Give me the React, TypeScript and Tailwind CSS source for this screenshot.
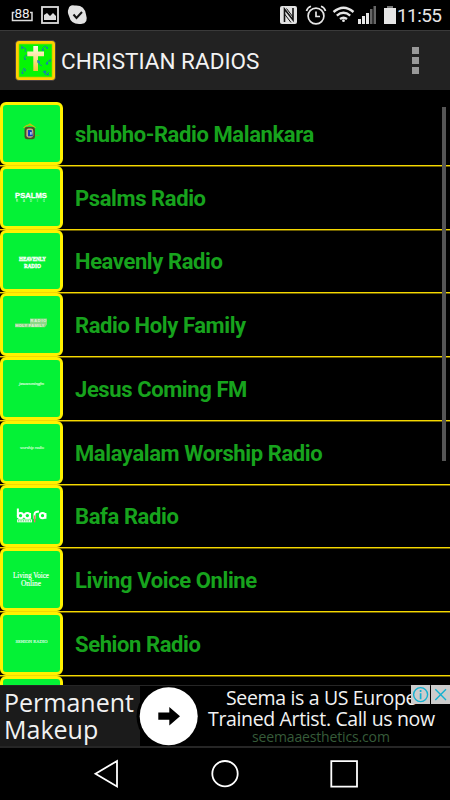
import React from 'react'

const BafaLogo = () => (
  <svg className="w-full h-full" viewBox="0 0 57 57">
    <g fill="none" stroke="#fff" strokeWidth="2">
      <path d="M14.800 20.500v9.500M27 25v6M42.500 25v6" />
      <circle cx="17.500" cy="27.700" r="2.700" />
      <circle cx="24.300" cy="27.700" r="2.700" />
      <path d="M31.500 31v-4.500q0-3 4.500-3" />
      <circle cx="39.600" cy="27.700" r="2.700" />
    </g>
    <path d="M14 31.500h15v3h-15z" fill="#e8ffe8" />
    <path d="M15 33h13" stroke="#04b52a" strokeWidth=".8" strokeDasharray="1.2 1.2" />
    <path d="M31.700 34.500v-7" stroke="#f0706c" strokeWidth="1.4" />
  </svg>
)

const CrestLogo = () => (
  <svg className="w-full h-full" viewBox="0 0 57 57">
    <path d="M20.500 23q6-6 12 0M24 21l3-2 3 2" fill="none" stroke="#b9c812" strokeWidth="1.200" />
    <rect x="21.500" y="22" width="10.500" height="12.500" rx="2.500" fill="#4c4b28" />
    <rect x="23.300" y="23.500" width="7" height="9.500" rx="2.500" fill="#c4a98a" />
    <path d="M25 25h3.500l1.500 6.500h-5z" fill="#173bb8" />
    <path d="M27 27h1.800v3h-1.800z" fill="#9bc4ee" />
    <path d="M32.500 30.500h4" stroke="#5cc51a" strokeWidth="1" />
  </svg>
)

const HolyFamilyLogo = () => (
  <svg className="w-full h-full" viewBox="0 0 57 57" fontFamily="Liberation Sans" fontWeight="700">
    <path d="M27 22.500h17v6l-2 3h-30v-4h15z" fill="#a5d396" opacity=".85" />
    <text x="27.500" y="26.300" fontSize="4" fill="#e2f2dc" textLength="16">RADIO</text>
    <text x="12.500" y="31" fontSize="4" fill="#e6efdc" textLength="29">HOLY FAMILY</text>
  </svg>
)

const PsalmsLogo = () => (
  <svg className="w-full h-full" viewBox="0 0 57 57" fontFamily="Liberation Sans" fontWeight="700" fill="#fff" stroke="#fff">
    <text x="12" y="29.300" fontSize="8" strokeWidth=".3" textLength="32" lengthAdjust="spacingAndGlyphs">PSALMS</text>
    <text x="13" y="33.500" fontSize="2.600" strokeWidth="0" textLength="29" opacity=".75">RADIO</text>
  </svg>
)

const HeavenlyLogo = () => (
  <svg className="w-full h-full" viewBox="0 0 57 57" fontFamily="Liberation Serif" fontWeight="700" fill="#fff" stroke="#fff" strokeWidth=".35">
    <text x="16" y="28.500" fontSize="5.800" textLength="27" lengthAdjust="spacingAndGlyphs">HEAVENLY</text>
    <text x="21" y="35.300" fontSize="5.800" textLength="17" lengthAdjust="spacingAndGlyphs">RADIO</text>
  </svg>
)

const JesusLogo = () => (
  <svg className="w-full h-full" viewBox="0 0 57 57" fontFamily="Liberation Serif" fontStyle="italic" fill="#d5ffd8" stroke="#d5ffd8" strokeWidth=".15">
    <text x="16" y="25.300" fontSize="4.600" textLength="25">jesuscomingfm</text>
  </svg>
)

const WorshipLogo = () => (
  <svg className="w-full h-full" viewBox="0 0 57 57" fontFamily="Liberation Serif" fontStyle="italic" fill="#c8ffcc" stroke="#c8ffcc" strokeWidth=".15">
    <text x="17" y="25.300" fontSize="4.600" textLength="24">worship radio</text>
  </svg>
)

const LivingLogo = () => (
  <svg className="w-full h-full" viewBox="0 0 57 57" fontFamily="Liberation Serif" fill="#fff" stroke="#fff" strokeWidth=".15">
    <text x="10" y="27.300" fontSize="7.400" textLength="36" lengthAdjust="spacingAndGlyphs">Living Voice</text>
    <text x="18" y="35.300" fontSize="7.400" textLength="20" lengthAdjust="spacingAndGlyphs">Online</text>
  </svg>
)

const SehionLogo = () => (
  <svg className="w-full h-full" viewBox="0 0 57 57" fontFamily="Liberation Serif" fill="#dcffe0" stroke="#dcffe0" strokeWidth=".15">
    <text x="12.500" y="28.300" fontSize="4.600" textLength="32" lengthAdjust="spacingAndGlyphs">SEHION RADIO</text>
  </svg>
)

const stations = [
  { name: 'shubho-Radio Malankara', logo: <CrestLogo /> },
  { name: 'Psalms Radio', logo: <PsalmsLogo /> },
  { name: 'Heavenly Radio', logo: <HeavenlyLogo /> },
  { name: 'Radio Holy Family', logo: <HolyFamilyLogo /> },
  { name: 'Jesus Coming FM', logo: <JesusLogo /> },
  { name: 'Malayalam Worship Radio', logo: <WorshipLogo /> },
  { name: 'Bafa Radio', logo: <BafaLogo /> },
  { name: 'Living Voice Online', logo: <LivingLogo /> },
  { name: 'Sehion Radio', logo: <SehionLogo /> },
  { name: '', logo: null },
]

const StatusBar = () => (
  <div className="flex h-[30px] shrink-0 bg-black">
    <svg className="w-[90px] h-[30px]" viewBox="0 0 90 30">
      <path d="M14.500 12.500h-2v8h19.500v-8h-2" fill="none" stroke="#ddd" strokeWidth="1.500" />
      <text x="14.600" y="18" fontSize="13.500" fill="#eee" fontFamily="Roboto" textLength="15">88</text>
      <rect x="42" y="7" width="16" height="16" fill="none" stroke="#ddd" strokeWidth="1.800" />
      <path d="M44 20v-5l3-2 3 3 3-3 3 3v4z" fill="#ddd" />
      <path d="M68.500 9q1-4.500 6-3.500 10-1 11.500 9 3 9-5 9.500-10 1-12-8-2-4-.5-7z" fill="#e2e2e2" />
      <path d="M73.500 14.500l3 3.500 5.500-6" fill="none" stroke="#111" strokeWidth="2" />
    </svg>
    <svg className="w-[121px] h-[30px] ml-auto" viewBox="276 0 121 30">
      <rect x="280" y="6" width="17" height="18" rx="2" fill="#e2e2e2" />
      <path d="M284.500 22V9l8.500 11V8" fill="none" stroke="#111" strokeWidth="1.600" />
      <path d="M286.500 8.500l6.500 8.500M284.500 14l6.500 8.500" fill="none" stroke="#111" strokeWidth="1" />
      <g fill="none" stroke="#e6e6e6" strokeWidth="1.700">
        <circle cx="316" cy="16" r="7.900" />
        <path d="M316 11.500v5h4M306.500 11q1-3.500 4.500-4.700M325.500 11q-1-3.500-4.500-4.700" />
      </g>
      <g fill="none" stroke="#e6e6e6" strokeWidth="2.400">
        <path d="M333.500 12q10-8.500 20 0M336.800 15.600q6.700-5.500 13.400 0M340 19q3.500-2.700 7 0" />
      </g>
      <circle cx="343.500" cy="20.700" r="1.400" fill="#e6e6e6" />
      <path d="M358 19h3v5h-3zM362 16h3v8h-3zM366 13h3v11h-3z" fill="#e6e6e6" />
      <path d="M370 9h2.500v15h-2.500zM373.500 6h2.500v18h-2.500z" fill="#666" />
      <path d="M387 6h6v2h-6z" fill="#777" />
      <path d="M384 8h12v16h-12z" fill="#e6e6e6" />
    </svg>
    <div className="w-[53px] text-[19px] leading-[31px] tracking-[-0.6px] text-[#e6e6e6] whitespace-nowrap">11:55</div>
  </div>
)

const AppIcon = () => (
  <svg className="w-[41px] h-[41px]" viewBox="0 0 41 41">
    <rect x=".5" y=".5" width="40" height="40" rx="3.500" fill="#ffd000" stroke="#2a2a5c" strokeWidth=".7" />
    <rect x="4" y="4" width="33" height="33" fill="#04f604" stroke="#9bd400" strokeWidth=".7" />
    <g fill="none" stroke="#178a9c" strokeWidth=".9">
      <path d="M6 6l5 3-1 3M9 18l2-3 2 1M27 9l3-3 3 2M32 22l4-3M31 24l2-2M7 32l2-4 2 2M28 31l3 4 3-3M24 24l3 2" />
    </g>
    <g fill="#147fb0">
      <circle cx="7" cy="8" r=".9" /><circle cx="10" cy="19" r="1" />
      <circle cx="28" cy="10" r="1" /><circle cx="32" cy="8" r=".9" />
      <circle cx="32" cy="23.500" r="1.200" /><circle cx="35" cy="21" r=".9" />
      <circle cx="7.500" cy="33" r="1.100" /><circle cx="10" cy="30.500" r=".9" />
      <circle cx="30" cy="32" r="1.400" /><circle cx="33" cy="34.500" r="1" />
    </g>
    <defs>
      <linearGradient id="cross" x1="0" y1="0" x2="0" y2="1">
        <stop offset="0" stopColor="#fffce8" />
        <stop offset="1" stopColor="#f4c63c" />
      </linearGradient>
    </defs>
    <path d="M18.300 6h4.700v5.500h6v4.800h-6v14.700h-4.700v-14.700h-6v-4.800h6z" fill="url(#cross)" />
    <path d="M22 20l3 1v3l-2.500-1z" fill="#1c88b8" />
  </svg>
)

const AdBanner = () => (
  <div className="flex relative h-[63px] shrink-0 bg-black border-t border-b-2 border-[#262626] font-['Open_Sans','Noto_Sans',sans-serif] text-[#f2f2f2]">
    <div className="w-[140px] shrink-0 bg-[#1b1b1b] pl-1 pt-[3px] text-[25px] leading-[27px] whitespace-nowrap">
      <div>Permanent</div>
      <div>Makeup</div>
    </div>
    <div className="flex-1 min-w-0 pl-[68px] pt-px whitespace-nowrap">
      <div className="pl-[18px] text-[19.500px] leading-[21px] tracking-[-0.35px]">Seema is a US Europe</div>
      <div className="text-[19.500px] leading-[21px] tracking-[-0.35px]">Trained Artist. Call us now</div>
      <div className="pl-11 text-[14px] leading-[15px] tracking-[-0.15px] text-[#365b39]">seemaaesthetics.com</div>
    </div>
    {/* arrow button sits over both halves */}
    <svg className="absolute left-[136px] top-0 w-[64px] h-[60px]" viewBox="0 0 64 60">
      <circle cx="32" cy="30.200" r="31.500" fill="#000" />
      <circle cx="32.700" cy="30.200" r="29" fill="#fff" />
      <path d="M22.300 26.500h11v-5.500l10.700 9.300-10.700 9.200v-5.700h-11z" fill="#000" />
    </svg>
    <svg className="absolute right-0 -top-px w-[39px] h-[19px]" viewBox="0 0 39 19">
      <path d="M0 0h19v19h-19zM20 0h19v19h-19z" fill="#ccc" />
      <g fill="none" stroke="#13b1d0" strokeWidth="1.400">
        <circle cx="9.600" cy="9.600" r="7" />
        <path d="M24.300 4.300l10.700 10.700M35 4.300l-10.700 10.700" />
        <path d="M9.600 8.300v6M9.600 5v2" strokeWidth="1.700" />
      </g>
    </svg>
  </div>
)

const App = () => {
  return (
    <div className="flex flex-col w-[450px] h-[800px] overflow-hidden bg-black font-[Roboto,sans-serif]">
      <StatusBar />

      {/* Action bar */}
      <div className="flex items-center h-[60px] shrink-0 pl-[15px] bg-[#222] border-t border-[#3a3a3a]">
        <AppIcon />
        <div className="ml-[5px] text-[22.500px] leading-[30px] text-[#f3f3f3] whitespace-nowrap">CHRISTIAN RADIOS</div>
        <div className="flex flex-col gap-[3px] ml-auto mr-[31px]">
          <div className="w-[7px] h-[7px] bg-[#999]" />
          <div className="w-[7px] h-[7px] bg-[#999]" />
          <div className="w-[7px] h-[7px] bg-[#999]" />
        </div>
      </div>

      {/* Station list */}
      <div className="relative h-[595px] shrink-0 pt-3 overflow-hidden">
        {stations.map((station, i) => (
          <div key={i} className="flex flex-col h-[63.750px]">
            <div className="flex items-center h-[62.750px] shrink-0">
              <div className="w-[63px] h-[62.750px] shrink-0 rounded-md border-3 border-[#fff200] bg-[#04f236]">
                {station.logo}
              </div>
              <div className="ml-3 pt-[3px] text-[22px] leading-[30px] tracking-[-0.4px] font-bold text-[#17a31d] whitespace-nowrap">{station.name}</div>
            </div>
            <div className="h-px shrink-0 bg-[#f5d800]" />
            <div className="h-px shrink-0 bg-[#6e5f00]" />
          </div>
        ))}
        <div className="absolute right-1 top-[17px] w-1 h-[354px] bg-[#555]" />
      </div>

      <AdBanner />

      {/* Navigation bar */}
      <div className="flex h-[52px] shrink-0 bg-black">
        <svg className="w-full h-full" viewBox="0 748 450 52" fill="none" stroke="#fff" strokeWidth="1.800">
          <path d="M95.500 773.700L117 761v25.500z" />
          <circle cx="225" cy="773.700" r="12.700" />
          <path d="M331.300 761.200h25.700v25.500h-25.700z" />
        </svg>
      </div>
    </div>
  )
}

export default App
